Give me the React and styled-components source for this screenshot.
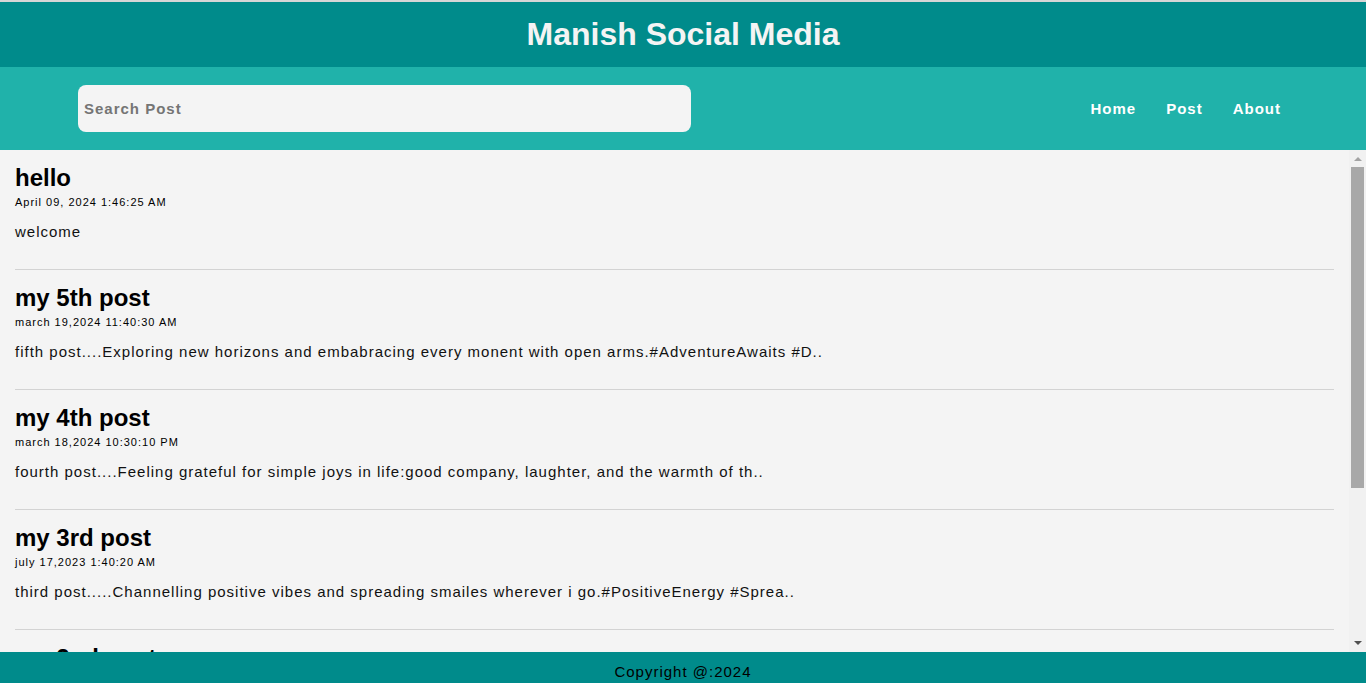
import React from 'react';
import styled, { createGlobalStyle } from 'styled-components';

const GlobalStyle = createGlobalStyle`
  * {
    box-sizing: border-box;
  }
  html, body {
    margin: 0;
    padding: 0;
    height: 100%;
    overflow: hidden;
  }
  body {
    font-family: "Liberation Sans", Arial, sans-serif;
    background-color: #d6d6d6;
  }
  #root {
    height: 100%;
  }
`;

// Whole page column
const Page = styled.div`
  display: flex;
  flex-direction: column;
  height: 100vh;
  padding-top: 2px;
`;

// Dark teal title bar
const Header = styled.header`
  height: 65px;
  flex-shrink: 0;
  background-color: #008b8b;
  display: flex;
  align-items: center;
  justify-content: center;
`;

const Title = styled.h1`
  margin: 0;
  font-size: 32px;
  font-weight: bold;
  color: #f4f4f4;
`;

// Search + links bar
const NavBar = styled.nav`
  height: 83px;
  flex-shrink: 0;
  background-color: #20b2aa;
  display: flex;
  align-items: center;
  justify-content: space-between;
  padding: 0 85px 0 78px;
`;

const SearchInput = styled.input`
  width: 613px;
  height: 47px;
  border: none;
  outline: none;
  border-radius: 8px;
  background-color: #f4f4f4;
  padding: 0 6px;
  font-family: "Liberation Sans", Arial, sans-serif;
  font-size: 15px;
  font-weight: bold;
  letter-spacing: 1px;
  color: #222;

  &::placeholder {
    color: #757575;
  }
`;

const Links = styled.ul`
  display: flex;
  gap: 30px;
  list-style: none;
  margin: 0;
  padding: 0;
`;

const NavLink = styled.a`
  color: #ffffff;
  font-size: 15px;
  font-weight: bold;
  letter-spacing: 1px;
  text-decoration: none;
  cursor: pointer;
`;

// Feed area: post list + scrollbar rail side by side
const FeedArea = styled.div`
  flex: 1;
  min-height: 0;
  display: flex;
  background-color: #f4f4f4;
`;

const Feed = styled.main`
  flex: 1;
  min-height: 0;
  overflow-y: auto;
  scrollbar-width: none;

  &::-webkit-scrollbar {
    display: none;
  }
`;

// Classic scrollbar look (the page scrolls with hidden native bars)
const Rail = styled.div`
  width: 17px;
  flex-shrink: 0;
  display: flex;
  flex-direction: column;
  background-color: #f1f1f1;
`;

const RailButton = styled.div`
  height: 17px;
  flex-shrink: 0;
  display: flex;
  align-items: center;
  justify-content: center;

  &::after {
    content: '';
    width: 0;
    height: 0;
    border-left: 4px solid transparent;
    border-right: 4px solid transparent;
    ${(p) =>
      p.$down
        ? 'border-top: 4px solid #505050; margin-top: -1px;'
        : 'border-bottom: 4px solid #a3a3a3; margin-top: 1px;'}
  }
`;

const RailTrack = styled.div`
  flex: 1;
  padding: 0 2px;
`;

const RailThumb = styled.div`
  height: 321px;
  background-color: #a8a8a8;
`;

const PostItem = styled.article`
  margin: 0 15px;
  padding: 14px 0 29px;
  border-bottom: 1px solid #d3d3d3;
`;

const PostTitle = styled.h2`
  margin: 0;
  font-size: 24px;
  line-height: 28px;
  font-weight: bold;
  color: #000;
`;

const PostDate = styled.div`
  margin-top: 4px;
  font-size: 11px;
  line-height: 13px;
  letter-spacing: 1px;
  color: #000;
`;

const PostBody = styled.p`
  margin: 14px 0 0;
  font-size: 15px;
  line-height: 17px;
  letter-spacing: 1px;
  color: #111;
`;

const Footer = styled.footer`
  height: 31px;
  flex-shrink: 0;
  background-color: #008b8b;
  padding-top: 11px;
  text-align: center;
  font-size: 15px;
  line-height: 17px;
  letter-spacing: 1px;
  color: #000;
  overflow: hidden;
`;

const posts = [
  { title: 'hello', date: 'April 09, 2024 1:46:25 AM', body: 'welcome' },
  {
    title: 'my 5th post',
    date: 'march 19,2024 11:40:30 AM',
    body: 'fifth post....Exploring new horizons and embabracing every monent with open arms.#AdventureAwaits #D..',
  },
  {
    title: 'my 4th post',
    date: 'march 18,2024 10:30:10 PM',
    body: 'fourth post....Feeling grateful for simple joys in life:good company, laughter, and the warmth of th..',
  },
  {
    title: 'my 3rd post',
    date: 'july 17,2023 1:40:20 AM',
    body: 'third post.....Channelling positive vibes and spreading smailes wherever i go.#PositiveEnergy #Sprea..',
  },
  {
    title: 'my 2nd post',
    date: 'june 12,2023 9:15:45 PM',
    body: 'second post....Chasing dreams and making memories one step at a time.#DreamBig #Memor..',
  },
  {
    title: 'my 1st post',
    date: 'may 02,2023 8:20:05 AM',
    body: 'first post....Hello world! Excited to start sharing my journey with all of you.#FirstPo..',
  },
];

const App = () => {
  return (
    <Page>
      <GlobalStyle />
      <Header>
        <Title>Manish Social Media</Title>
      </Header>

      <NavBar>
        <SearchInput type="text" placeholder="Search Post" />
        <Links>
          <li><NavLink>Home</NavLink></li>
          <li><NavLink>Post</NavLink></li>
          <li><NavLink>About</NavLink></li>
        </Links>
      </NavBar>

      <FeedArea>
        <Feed>
          {posts.map((post) => (
            <PostItem key={post.title}>
              <PostTitle>{post.title}</PostTitle>
              <PostDate>{post.date}</PostDate>
              <PostBody>{post.body}</PostBody>
            </PostItem>
          ))}
        </Feed>
        <Rail>
          <RailButton />
          <RailTrack>
            <RailThumb />
          </RailTrack>
          <RailButton $down />
        </Rail>
      </FeedArea>

      <Footer>Copyright @:2024</Footer>
    </Page>
  );
};

export default App;
